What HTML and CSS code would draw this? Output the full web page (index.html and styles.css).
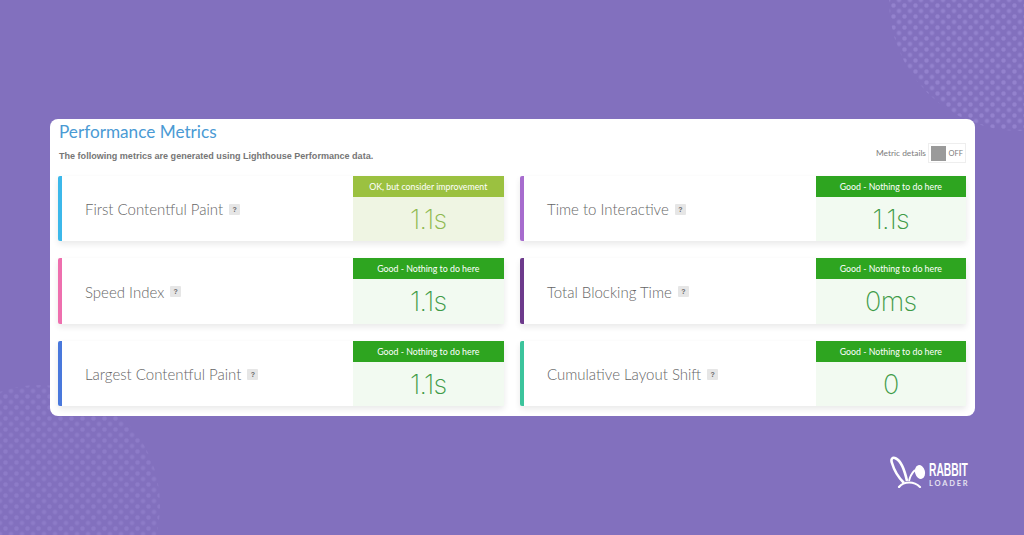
FILE: index.html
```html
<!DOCTYPE html>
<html lang="en">
<head>
  <meta charset="UTF-8">
  <meta name="viewport" content="width=device-width, initial-scale=1.0">
  <title>Performance Metrics</title>
  <link rel="stylesheet" href="styles.css">
</head>

<body>
  <div class="dots dots-top"></div>
  <div class="dots dots-bottom"></div>

  <main class="panel">
    <h1 class="panel-title">Performance Metrics</h1>
    <div class="panel-sub">
      <p class="panel-desc">The following metrics are generated using Lighthouse Performance data.</p>
      <div class="details-toggle">
        <span>Metric details</span>
        <span class="switch"><span class="switch-knob"></span><span class="switch-text">OFF</span></span>
      </div>
    </div>

    <div class="metrics-grid">
      <section class="metric metric-blue">
        <div class="metric-name">First Contentful Paint <span class="help">?</span></div>
        <div class="metric-status status-ok">
          <div class="status-label">OK, but consider improvement</div>
          <div class="status-value">1.1s</div>
        </div>
      </section>
      <section class="metric metric-purple">
        <div class="metric-name">Time to Interactive <span class="help">?</span></div>
        <div class="metric-status status-good">
          <div class="status-label">Good - Nothing to do here</div>
          <div class="status-value">1.1s</div>
        </div>
      </section>
      <section class="metric metric-pink">
        <div class="metric-name">Speed Index <span class="help">?</span></div>
        <div class="metric-status status-good">
          <div class="status-label">Good - Nothing to do here</div>
          <div class="status-value">1.1s</div>
        </div>
      </section>
      <section class="metric metric-plum">
        <div class="metric-name">Total Blocking Time <span class="help">?</span></div>
        <div class="metric-status status-good">
          <div class="status-label">Good - Nothing to do here</div>
          <div class="status-value">0ms</div>
        </div>
      </section>
      <section class="metric metric-indigo">
        <div class="metric-name">Largest Contentful Paint <span class="help">?</span></div>
        <div class="metric-status status-good">
          <div class="status-label">Good - Nothing to do here</div>
          <div class="status-value">1.1s</div>
        </div>
      </section>
      <section class="metric metric-teal">
        <div class="metric-name">Cumulative Layout Shift <span class="help">?</span></div>
        <div class="metric-status status-good">
          <div class="status-label">Good - Nothing to do here</div>
          <div class="status-value">0</div>
        </div>
      </section>
    </div>
  </main>

  <div class="brand">
    <svg class="brand-mark" width="38" height="32" viewBox="0 0 38 32" aria-hidden="true">
      <path d="M17 25C15 16 11 5 6 2.500C2.500 0.500 0.500 3 2 7C4 14 9 22 14 27" fill="none" stroke="#fff" stroke-width="2.600" stroke-linejoin="round"/>
      <path d="M19 25C20 20 22 17 25 14" fill="none" stroke="#fff" stroke-width="1.800"/>
      <ellipse cx="30" cy="16" rx="5" ry="7" transform="rotate(-15 30 16)" fill="#fff"/>
      <path d="M9 31C14 25 24 25 30 31" fill="none" stroke="#fff" stroke-width="2.200" stroke-linecap="round"/>
    </svg>
    <div class="brand-text">
      <div class="brand-name">RABBIT</div>
      <div class="brand-sub">LOADER</div>
    </div>
  </div>
</body>

</html>
```

FILE: styles.css
```css
:root {
  --page-bg: #8270be;
  --good: #2ea520;
  --good-bg: #f2faf1;
  --good-text: #3f9b48;
  --ok: #9bc140;
  --ok-bg: #eff5e3;
  --ok-text: #8eb950;
  --text: #666;
}

* {
  margin: 0;
  padding: 0;
  box-sizing: border-box;
}

html,
body {
  height: 100%;
  overflow: hidden;
}

body {
  position: relative;
  padding: 119px 49px 0 50px;
  background: var(--page-bg);
  font-family: Lato, 'Noto Sans', sans-serif;
  color: var(--text);
}

/* decorative dotted blobs */
.dots {
  position: absolute;
  background-image:
    radial-gradient(circle, var(--dot) 1.5px, transparent 2.8px),
    radial-gradient(circle, var(--dot) 1.5px, transparent 2.8px);
  background-size: 11px 11px;
  background-position: 0 0, 5.5px 5.5px;
}

.dots-top {
  --dot: rgba(175, 160, 230, 0.38);
  top: 0;
  left: 888px;
  width: 136px;
  height: 132px;
  clip-path: circle(131px at 132px 0);
}

.dots-bottom {
  --dot: rgba(175, 160, 230, 0.24);
  top: 380px;
  left: 0;
  width: 165px;
  height: 155px;
  clip-path: circle(120px at 40px 125px);
}

.panel {
  position: relative;
  width: 925px;
  height: 297px;
  padding: 3px 9px 0 8px;
  background: #fff;
  border-radius: 8px;
}

.panel-title {
  padding-left: 1px;
  font-size: 17.2px;
  line-height: 20px;
  font-weight: 400;
  color: #4a9ad4;
}

.panel-sub {
  display: flex;
  align-items: flex-start;
  justify-content: space-between;
  height: 34px;
}

.panel-desc {
  padding: 9px 0 0 1px;
  font-family: 'Liberation Sans', Arial, sans-serif;
  font-size: 9.05px;
  line-height: 10px;
  font-weight: 700;
  color: #767676;
}

.details-toggle {
  display: flex;
  align-items: center;
  gap: 2px;
  margin-top: 1px;
  font-size: 8.4px;
  color: #7d7d7d;
}

.switch {
  display: flex;
  align-items: center;
  gap: 3px;
  width: 38px;
  height: 20px;
  padding: 2px;
  border: 1px solid #eee;
}

.switch-knob {
  width: 16px;
  height: 15px;
  background: #9a9a9a;
}

.switch-text {
  font-size: 7.5px;
}

.metrics-grid {
  display: grid;
  grid-template-columns: 445.5px 446px;
  grid-template-rows: 65px 66px 65px;
  column-gap: 16.5px;
  row-gap: 17px;
}

.metric {
  display: flex;
  align-items: stretch;
  background: #fff;
  border-left: 4px solid;
  border-radius: 2px 0 0 2px;
  box-shadow: 0 3px 6px rgba(0, 0, 0, 0.09);
}

.metric-blue { border-color: #3cb8ea; }
.metric-purple { border-color: #a76cce; }
.metric-pink { border-color: #ee6fae; }
.metric-plum { border-color: #6d3a8c; }
.metric-indigo { border-color: #4978dc; }
.metric-teal { border-color: #3cc49c; }

.metric-name {
  flex: 1;
  display: flex;
  align-items: center;
  gap: 6px;
  padding: 1px 0 0 23px;
  font-size: 15px;
  font-weight: 300;
  color: var(--text);
}

.help {
  display: inline-block;
  width: 11px;
  height: 11px;
  background: #e6e6e6;
  border-radius: 1px;
  font-family: 'Liberation Sans', Arial, sans-serif;
  font-size: 7px;
  font-weight: 700;
  line-height: 11px;
  text-align: center;
  color: #666;
}

.metric-status {
  display: flex;
  flex-direction: column;
  width: 150.5px;
}

.status-label {
  height: 21px;
  font-size: 8.8px;
  line-height: 21px;
  text-align: center;
  color: #fff;
}

.status-value {
  flex: 1;
  display: flex;
  align-items: center;
  justify-content: center;
  font-family: Inter, Lato, sans-serif;
  font-size: 27px;
  font-weight: 200;
  letter-spacing: -0.7px;
}

.status-good .status-label { background: var(--good); }
.status-good .status-value { background: var(--good-bg); color: var(--good-text); }
.status-ok .status-label { background: var(--ok); }
.status-ok .status-value { background: var(--ok-bg); color: var(--ok-text); }

/* logo, bottom right */
.brand {
  position: absolute;
  top: 456px;
  left: 890px;
  display: flex;
  align-items: flex-start;
  gap: 1px;
  color: #fff;
}

.brand-text {
  width: 40px;
  padding-top: 5px;
  white-space: nowrap;
}

.brand-name {
  font-family: 'Liberation Sans', sans-serif;
  font-size: 19px;
  font-weight: 700;
  line-height: 17px;
  transform: scaleX(0.54);
  transform-origin: left;
}

.brand-sub {
  margin-top: 1px;
  font-size: 7.5px;
  font-weight: 700;
  line-height: 9px;
  letter-spacing: 1.8px;
  opacity: 0.8;
}
```
